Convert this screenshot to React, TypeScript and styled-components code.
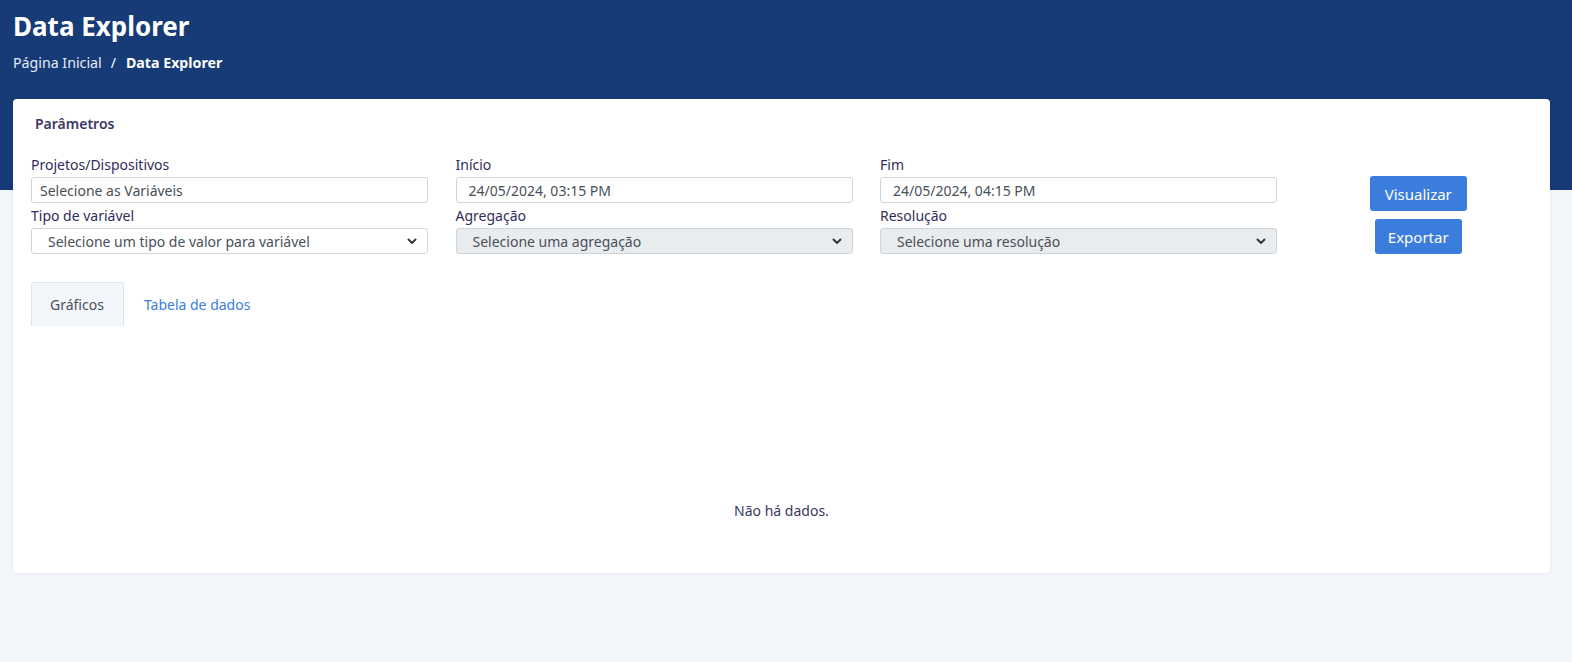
import styled, { createGlobalStyle } from "styled-components";

const GlobalStyle = createGlobalStyle`
  * {
    box-sizing: border-box;
  }

  body {
    margin: 0;
    background: #f3f6fb;
    font-family: "Noto Sans", "Open Sans", sans-serif;
    font-size: 14px;
    color: #37345f;
  }
`;

const Chevron = () => (
  <svg width="10" height="7" viewBox="0 0 10 7" fill="none">
    <path
      d="M1.5 1.5L5 5l3.5-3.5"
      stroke="#343a40"
      strokeWidth="2"
      strokeLinecap="round"
      strokeLinejoin="round"
    />
  </svg>
);

interface SelectProps {
  value: string;
  disabled?: boolean;
}

function SelectBox({ value, disabled }: SelectProps) {
  return (
    <Select $disabled={disabled}>
      <span>{value}</span>
      <Chevron />
    </Select>
  );
}

export default function App() {
  return (
    <>
      <GlobalStyle />
      <Page>
        <Header>
          <Title>Data Explorer</Title>
          <Breadcrumb>
            <span>Página Inicial</span>
            <Separator>/</Separator>
            <strong>Data Explorer</strong>
          </Breadcrumb>
        </Header>

        <Card>
          <CardTitle>Parâmetros</CardTitle>

          <Filters>
            <Field>
              <Label>Projetos/Dispositivos</Label>
              <Input>Selecione as Variáveis</Input>
              <Label>Tipo de variável</Label>
              <SelectBox value="Selecione um tipo de valor para variável" />
            </Field>

            <Field>
              <Label>Início</Label>
              <Input $indent>24/05/2024, 03:15 PM</Input>
              <Label>Agregação</Label>
              <SelectBox value="Selecione uma agregação" disabled />
            </Field>

            <Field>
              <Label>Fim</Label>
              <Input $indent>24/05/2024, 04:15 PM</Input>
              <Label>Resolução</Label>
              <SelectBox value="Selecione uma resolução" disabled />
            </Field>

            <Actions>
              <Button>Visualizar</Button>
              <Button $compact>Exportar</Button>
            </Actions>
          </Filters>

          <Tabs>
            <Tab $active>Gráficos</Tab>
            <Tab>Tabela de dados</Tab>
          </Tabs>

          <Empty>Não há dados.</Empty>
        </Card>
      </Page>
    </>
  );
}

const Page = styled.div`
  min-height: 662px;
  background: linear-gradient(#163b76 0, #163b76 190px, #f3f6fb 190px);
  padding: 0 22px 0 13px;
`;

const Header = styled.header`
  display: flex;
  flex-direction: column;
  padding-top: 9px;
  height: 99px;
  color: #ffffff;
`;

const Title = styled.h1`
  margin: 0;
  font-size: 26px;
  font-weight: 700;
  line-height: 34px;
`;

const Breadcrumb = styled.nav`
  display: flex;
  align-items: center;
  margin-top: 10px;
  font-size: 14.2px;
  color: #e8ecf5;

  strong {
    color: #ffffff;
    font-weight: 700;
  }
`;

const Separator = styled.span`
  margin: 0 10px 0 9px;
  color: #ffffff;
`;

const Card = styled.section`
  display: flex;
  flex-direction: column;
  background: #ffffff;
  border-radius: 4px;
  box-shadow: 0 0 4px rgba(33, 40, 80, 0.08);
  padding: 15px 18px 53px;
`;

const CardTitle = styled.h2`
  margin: 0 0 0 4px;
  font-size: 14px;
  font-weight: 600;
  line-height: 20px;
  color: #3b3863;
`;

const Filters = styled.div`
  display: grid;
  grid-template-columns: repeat(3, 397px) 1fr;
  column-gap: 27.5px;
  margin-top: 18px;
`;

const Field = styled.div`
  display: flex;
  flex-direction: column;
`;

const Label = styled.label`
  font-size: 14px;
  line-height: 25px;
  color: #302d5a;
`;

const Input = styled.div<{ $indent?: boolean }>`
  display: flex;
  align-items: center;
  height: 26px;
  padding: 0 ${({ $indent }) => ($indent ? "12px" : "8px")};
  border: 1px solid #ced4da;
  border-radius: 3px;
  font-size: 14px;
  color: #495057;
`;

const Select = styled.div<{ $disabled?: boolean }>`
  display: flex;
  align-items: center;
  justify-content: space-between;
  height: 26px;
  padding: 0 10px 0 16px;
  border: 1px solid #ced4da;
  border-radius: 3px;
  background: ${({ $disabled }) => ($disabled ? "#e9ecef" : "#ffffff")};
  font-size: 14px;
  color: #495057;
`;

const Actions = styled.div`
  display: flex;
  flex-direction: column;
  align-items: center;
  justify-content: center;
  gap: 8px;
  padding-top: 24px;
`;

const Button = styled.button<{ $compact?: boolean }>`
  height: 35px;
  padding: 0 ${({ $compact }) => ($compact ? "13px" : "15px")};
  border: none;
  border-radius: 3px;
  background: #3b7ddd;
  color: #ffffff;
  font-family: inherit;
  font-size: 15px;
`;

const Tabs = styled.div`
  display: flex;
  margin-top: 28px;
`;

const Tab = styled.div<{ $active?: boolean }>`
  display: flex;
  align-items: center;
  height: 44px;
  padding: 0 19px 0 18px;
  margin-right: 1px;
  border: 1px solid ${({ $active }) => ($active ? "#e1e5eb" : "transparent")};
  border-bottom: none;
  border-radius: 3px 3px 0 0;
  background: ${({ $active }) => ($active ? "#f3f6fb" : "transparent")};
  color: ${({ $active }) => ($active ? "#495057" : "#3b7ddd")};
  font-size: 14px;
`;

const Empty = styled.p`
  margin: 175px 0 0;
  text-align: center;
  font-size: 14px;
  color: #3b3863;
`;
